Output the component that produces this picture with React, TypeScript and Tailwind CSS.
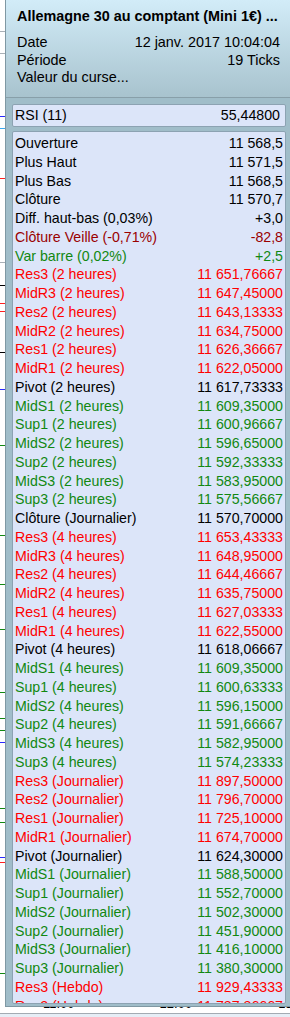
import React from 'react';

type Row = {
  label: string;
  value: string;
  color: string;
};

const BLACK = 'text-black';
const RED = 'text-[#ff0000]';
const DARK_RED = 'text-[#9a0000]';
const GREEN = 'text-[#118811]';

const ROWS: Row[] = [
  { label: 'Ouverture', value: '11 568,5', color: BLACK },
  { label: 'Plus Haut', value: '11 571,5', color: BLACK },
  { label: 'Plus Bas', value: '11 568,5', color: BLACK },
  { label: 'Clôture', value: '11 570,7', color: BLACK },
  { label: 'Diff. haut-bas (0,03%)', value: '+3,0', color: BLACK },
  { label: 'Clôture Veille (-0,71%)', value: '-82,8', color: DARK_RED },
  { label: 'Var barre (0,02%)', value: '+2,5', color: GREEN },
  { label: 'Res3 (2 heures)', value: '11 651,76667', color: RED },
  { label: 'MidR3 (2 heures)', value: '11 647,45000', color: RED },
  { label: 'Res2 (2 heures)', value: '11 643,13333', color: RED },
  { label: 'MidR2 (2 heures)', value: '11 634,75000', color: RED },
  { label: 'Res1 (2 heures)', value: '11 626,36667', color: RED },
  { label: 'MidR1 (2 heures)', value: '11 622,05000', color: RED },
  { label: 'Pivot (2 heures)', value: '11 617,73333', color: BLACK },
  { label: 'MidS1 (2 heures)', value: '11 609,35000', color: GREEN },
  { label: 'Sup1 (2 heures)', value: '11 600,96667', color: GREEN },
  { label: 'MidS2 (2 heures)', value: '11 596,65000', color: GREEN },
  { label: 'Sup2 (2 heures)', value: '11 592,33333', color: GREEN },
  { label: 'MidS3 (2 heures)', value: '11 583,95000', color: GREEN },
  { label: 'Sup3 (2 heures)', value: '11 575,56667', color: GREEN },
  { label: 'Clôture (Journalier)', value: '11 570,70000', color: BLACK },
  { label: 'Res3 (4 heures)', value: '11 653,43333', color: RED },
  { label: 'MidR3 (4 heures)', value: '11 648,95000', color: RED },
  { label: 'Res2 (4 heures)', value: '11 644,46667', color: RED },
  { label: 'MidR2 (4 heures)', value: '11 635,75000', color: RED },
  { label: 'Res1 (4 heures)', value: '11 627,03333', color: RED },
  { label: 'MidR1 (4 heures)', value: '11 622,55000', color: RED },
  { label: 'Pivot (4 heures)', value: '11 618,06667', color: BLACK },
  { label: 'MidS1 (4 heures)', value: '11 609,35000', color: GREEN },
  { label: 'Sup1 (4 heures)', value: '11 600,63333', color: GREEN },
  { label: 'MidS2 (4 heures)', value: '11 596,15000', color: GREEN },
  { label: 'Sup2 (4 heures)', value: '11 591,66667', color: GREEN },
  { label: 'MidS3 (4 heures)', value: '11 582,95000', color: GREEN },
  { label: 'Sup3 (4 heures)', value: '11 574,23333', color: GREEN },
  { label: 'Res3 (Journalier)', value: '11 897,50000', color: RED },
  { label: 'Res2 (Journalier)', value: '11 796,70000', color: RED },
  { label: 'Res1 (Journalier)', value: '11 725,10000', color: RED },
  { label: 'MidR1 (Journalier)', value: '11 674,70000', color: RED },
  { label: 'Pivot (Journalier)', value: '11 624,30000', color: BLACK },
  { label: 'MidS1 (Journalier)', value: '11 588,50000', color: GREEN },
  { label: 'Sup1 (Journalier)', value: '11 552,70000', color: GREEN },
  { label: 'MidS2 (Journalier)', value: '11 502,30000', color: GREEN },
  { label: 'Sup2 (Journalier)', value: '11 451,90000', color: GREEN },
  { label: 'MidS3 (Journalier)', value: '11 416,10000', color: GREEN },
  { label: 'Sup3 (Journalier)', value: '11 380,30000', color: GREEN },
  { label: 'Res3 (Hebdo)', value: '11 929,43333', color: RED },
  { label: 'Res2 (Hebdo)', value: '11 787,86667', color: RED },
];

// chart lines peeking out on the left of the panel: [top, colour]
const CHART_LINES: [number, string][] = [
  [31, '#a9b0b6'], [53, '#a9b0b6'], [116, '#2a2aff'], [128, '#3aa8f0'],
  [178, '#ff2020'], [262, '#a9b0b6'], [285, '#000000'], [303, '#ff2020'],
  [311, '#ff2020'], [352, '#000000'], [389, '#2a2aff'], [445, '#118811'],
  [535, '#118811'], [584, '#118811'], [629, '#118811'], [692, '#118811'],
  [718, '#118811'], [730, '#118811'], [742, '#2a2aff'], [808, '#118811'],
  [822, '#118811'], [857, '#2a2aff'], [862, '#ff2020'], [973, '#118811'],
];

export default function App() {
  return (
    <div className="w-[290px] h-[1017px] overflow-hidden bg-white flex flex-col font-['Liberation_Sans',Arial,sans-serif] text-[14.2px] text-black">
      <div className="flex h-[1007px] shrink-0">
        {/* chart behind the tooltip */}
        <div className="relative w-[5px] shrink-0 bg-white">
          {CHART_LINES.map(([top, color], index) => (
            <div
              key={`line-${top}-${index}`}
              className="absolute left-0 w-[5px] h-[1px]"
              style={{ top, backgroundColor: color }}
            />
          ))}
        </div>

        <div className="flex-1 flex flex-col border-l border-b border-[#7f98a3] bg-[#a0bdc9] overflow-hidden">
          {/* header */}
          <div className="h-[97px] shrink-0 pl-[11px] pr-[10px] pt-[8px] text-[14.4px] bg-gradient-to-b from-[#d2ecf8] to-[#a8c3ce]">
            <div className="h-[17px] leading-[17px] font-bold whitespace-nowrap">
              Allemagne 30 au comptant (Mini 1€) ...
            </div>
            <div className="mt-[9px] flex justify-between h-[17.5px] leading-[17.5px] whitespace-nowrap">
              <span>Date</span>
              <span>12 janv. 2017 10:04:04</span>
            </div>
            <div className="flex justify-between h-[17.5px] leading-[17.5px]">
              <span>Période</span>
              <span>19 Ticks</span>
            </div>
            <div className="h-[17.5px] leading-[17.5px]">Valeur du curse...</div>
          </div>
          <div className="h-[1px] shrink-0 bg-[#889fa9]" />

          <div className="flex-1 flex flex-col pl-[6px] pr-[4px] min-h-0">
            {/* RSI */}
            <div className="mt-[6px] h-[23px] shrink-0 flex items-center justify-between pl-[2px] pr-[5px] rounded-[2px] border border-[#8ca2b2] bg-[#dce5f9]">
              <span>RSI (11)</span>
              <span>55,44800</span>
            </div>

            {/* values */}
            <div className="mt-[4px] h-[873px] shrink-0 overflow-hidden pt-[2px] pl-[2px] pr-[2px] rounded-[2px] border border-[#8ca2b2] bg-[#dce5f9]">
              {ROWS.map((row, index) => (
                <div
                  key={`row-${row.label}-${index}`}
                  className={`flex justify-between h-[18.75px] leading-[18.75px] whitespace-nowrap ${row.color}`}
                >
                  <span>{row.label}</span>
                  <span>{row.value}</span>
                </div>
              ))}
            </div>
          </div>
        </div>
      </div>

      {/* time axis of the chart, cut by the panel */}
      <div className="h-[6px] shrink-0 overflow-hidden">
        <div className="flex -mt-[11px] h-[15px] leading-[15px] text-[13px] whitespace-nowrap">
          <span className="ml-[43px]">11:00</span>
          <span className="ml-[85px]">12:00</span>
          <span className="ml-[86px]">13:00</span>
        </div>
      </div>
      <div className="h-[1px] shrink-0 bg-[#a3abb3]" />
      <div className="flex-1 bg-[#e6eef6]" />
    </div>
  );
}
